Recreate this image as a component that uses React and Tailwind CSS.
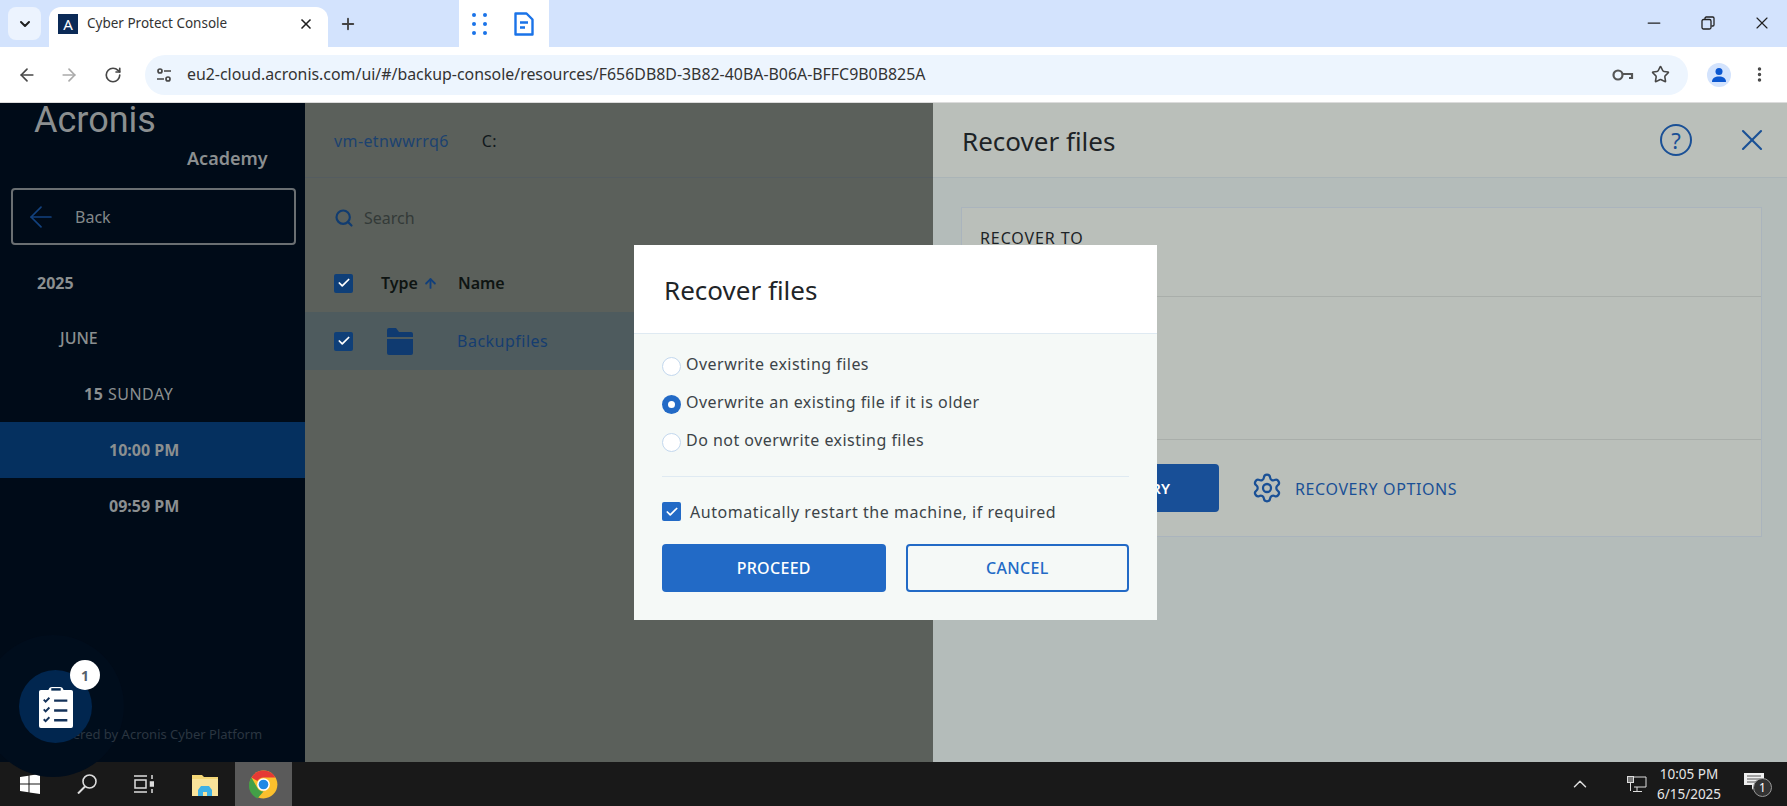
import { ArrowLeft, ArrowRight, ArrowUp, ChevronDown, ChevronUp, Check, EllipsisVertical, Minus, Plus, RotateCw, Search, Settings, Star, X } from 'lucide-react';

const sans = { fontFamily: '"Noto Sans", "Open Sans", sans-serif' };

function BlueCheck({ className }) {
  return (
    <span className={`flex h-[19px] w-[19px] shrink-0 items-center justify-center rounded-[2px] ${className}`}>
      <Check size={14} strokeWidth={3} className="text-white" />
    </span>
  );
}

function Radio({ checked }) {
  if (checked) {
    return (
      <span className="flex h-[19px] w-[19px] shrink-0 items-center justify-center rounded-full bg-[#226ac6]">
        <span className="h-[7px] w-[7px] rounded-full bg-white" />
      </span>
    );
  }
  return <span className="h-[19px] w-[19px] shrink-0 rounded-full border border-[#c3d8ee] bg-white" />;
}

function ChromeIcon() {
  return (
    <svg width="29" height="29" viewBox="0 0 48 48">
      <circle cx="24" cy="24" r="23" fill="#fbc02d" />
      <path d="M24 1a23 23 0 0 1 19.9 11.5H24a11.5 11.5 0 0 0-10 5.8L4.1 12.5A23 23 0 0 1 24 1z" fill="#e53935" />
      <path d="M4.1 12.5 14 29.8a11.5 11.5 0 0 0 10 5.7L14 47 A23 23 0 0 1 4.1 12.5z" fill="#43a047" />
      <circle cx="24" cy="24" r="10.5" fill="#fff" />
      <circle cx="24" cy="24" r="8" fill="#1e88e5" />
    </svg>
  );
}

function ChromeBar() {
  return (
    <>
      <div className="flex h-[47px] shrink-0 bg-[#d3e3fd] text-[#1f1f1f]">
        <div className="ml-[8px] mt-[7px] flex h-[33px] w-[33px] items-center justify-center rounded-lg bg-[#ecf3fe]">
          <ChevronDown size={16} strokeWidth={3} />
        </div>
        <div className="ml-[8px] mt-[7px] flex h-[40px] w-[279px] items-start rounded-t-xl bg-white pl-[9px] pt-[7px]">
          <span className="flex h-[20px] w-[20px] items-center justify-center bg-[#0b2a57] text-[15px] text-white">A</span>
          <span className="ml-[9px] w-[211px] text-[13.5px] leading-[19px] text-[#333]" style={sans}>Cyber Protect Console</span>
          <X size={16} strokeWidth={2.5} className="mt-[2px]" />
        </div>
        <Plus size={18} strokeWidth={2.5} className="ml-[11px] mt-[15px] text-[#444]" />
        <div className="ml-[102px] flex h-[48px] w-[90px] items-center bg-white pl-[12px]">
          <svg width="18" height="24" viewBox="0 0 18 24" fill="#1a73e8">
            <circle cx="3" cy="3" r="2" /><circle cx="14" cy="3" r="2" />
            <circle cx="3" cy="12" r="2" /><circle cx="14" cy="12" r="2" />
            <circle cx="3" cy="21" r="2" /><circle cx="14" cy="21" r="2" />
          </svg>
          <svg className="ml-[25px]" width="20" height="24" viewBox="0 0 20 24" fill="none" stroke="#1a73e8" strokeWidth="2.4">
            <path d="M1.5 1.5h11l6 6v15h-17z" strokeLinejoin="round" />
            <path d="M6 10.5h8M6 15.5h5" />
          </svg>
        </div>
        <div className="ml-auto mr-[15px] flex items-center gap-[37px] pb-[1px] text-[#222]">
          <Minus size={20} strokeWidth={1.5} />
          <svg width="14" height="14" viewBox="0 0 14 14" fill="none" stroke="currentColor" strokeWidth="1.3">
            <rect x="1" y="3.5" width="9" height="9.5" rx="1.5" />
            <path d="M4 3V2.2A1.2 1.2 0 0 1 5.2 1h6.6A1.2 1.2 0 0 1 13 2.2v6.6A1.2 1.2 0 0 1 11.8 10H10.5" />
          </svg>
          <X size={20} strokeWidth={1.4} />
        </div>
      </div>
      <div className="flex h-[56px] shrink-0 items-center rounded-t-lg border-b border-[#dcdcdc] bg-white pl-[17px] text-[#474747]">
        <ArrowLeft size={20} strokeWidth={2} />
        <ArrowRight size={20} strokeWidth={2} className="ml-[22px] text-[#aaaaaa]" />
        <RotateCw size={18} strokeWidth={2.2} className="ml-[25px]" />
        <div className="ml-[23px] flex h-[40px] w-[1543px] items-center rounded-full bg-[#edf5fe] pl-[11px]">
          <svg width="16" height="16" viewBox="0 0 16 16" fill="none" stroke="#474747" strokeWidth="1.7">
            <circle cx="4" cy="4" r="2" /><path d="M8 4h7M1 12h7" /><circle cx="12" cy="12" r="2" />
          </svg>
          <span className="ml-[15px] w-[1425px] text-[15.9px] text-[#333]" style={sans}>eu2-cloud.acronis.com/ui/#/backup-console/resources/F656DB8D-3B82-40BA-B06A-BFFC9B0B825A</span>
          <svg width="22" height="14" viewBox="0 0 22 14" fill="none" stroke="#555" strokeWidth="2.2">
            <circle cx="6" cy="7" r="4.5" /><path d="M11 6h9v4h-3" />
          </svg>
          <Star size={19} strokeWidth={2} className="ml-[17px]" />
        </div>
        <div className="ml-[19px] flex h-[24px] w-[24px] items-center justify-center rounded-full bg-[#d3e3fd]">
          <svg width="16" height="16" viewBox="0 0 16 16" fill="#0b57d0">
            <circle cx="8" cy="4.5" r="3.5" /><path d="M1 15c0-4 3-5.5 7-5.5s7 1.5 7 5.5z" />
          </svg>
        </div>
        <EllipsisVertical size={19} strokeWidth={2.4} className="ml-[19px]" />
      </div>
    </>
  );
}

function Sidebar() {
  return (
    <div className="relative flex w-[305px] shrink-0 flex-col bg-[#000b18] text-[#8b8f90]" style={sans}>
      <div className="absolute left-[-18px] top-[532px] h-[142px] w-[142px] rounded-full bg-[#000d1c]" />
      <div className="relative h-[85px] pl-[34px]">
        <div className="text-[36px] leading-[34px]" style={{ fontFamily: 'Roboto, sans-serif' }}>Acronis</div>
        <div className="ml-[153px] mt-[9px] text-[18px] font-semibold leading-[24px]">Academy</div>
      </div>
      <div className="relative ml-[11px] flex h-[57px] w-[285px] items-center rounded-[4px] border-2 border-[#6a6f72] pl-[11px]">
        <ArrowLeft size={34} strokeWidth={1.2} className="text-[#12427f]" />
        <span className="ml-[17px] text-[16px] text-[#83888a]">Back</span>
      </div>
      <div className="relative mt-[9px] flex h-[56px] items-center pl-[37px] pt-[1px] text-[16px] font-bold">2025</div>
      <div className="relative flex h-[56px] items-center pl-[60px] text-[16px] font-medium">JUNE</div>
      <div className="relative flex h-[56px] items-center pl-[84px] text-[16px] tracking-[0.5px]"><b>15</b>&nbsp;SUNDAY</div>
      <div className="relative flex h-[56px] items-center bg-[#05305f] pl-[109px] text-[16px] font-bold">10:00 PM</div>
      <div className="relative flex h-[56px] items-center pl-[109px] text-[16px] font-bold">09:59 PM</div>
      <div className="relative mt-auto pb-[18px] pl-[47px] text-[13px] text-[#2b3641]">Powered by Acronis Cyber Platform</div>

      <div className="absolute left-[19px] top-[567px] flex h-[73px] w-[73px] items-center justify-center rounded-full bg-[#01264f]">
        <svg width="34" height="43" viewBox="0 0 36 44" preserveAspectRatio="none">
          <path d="M2 5h8a4 4 0 0 1 4-3h8a4 4 0 0 1 4 3h8a2 2 0 0 1 2 2v35a2 2 0 0 1-2 2H2a2 2 0 0 1-2-2V7a2 2 0 0 1 2-2z" fill="#fff" />
          <path d="M13 4.500h10" stroke="#01264f" strokeWidth="2.500" />
          <g fill="none" stroke="#14325a" strokeWidth="2">
            <path d="M5 15l2 2 4-4M5 25l2 2 4-4M5 35l2 2 4-4" />
            <path d="M16 16h14M16 26h14M16 36h14" strokeWidth="2.500" />
          </g>
        </svg>
      </div>
      <div className="absolute left-[70px] top-[557px] flex h-[30px] w-[30px] items-center justify-center rounded-full bg-white text-[14px] font-bold text-[#555f6c]">1</div>
    </div>
  );
}

function FilesColumn() {
  return (
    <div className="flex w-[628px] shrink-0 flex-col bg-[#5b605b]" style={sans}>
      <div className="flex h-[75px] items-center border-b border-[#545c60] pl-[29px] pt-[2px] text-[16px] tracking-[0.4px]">
        <span className="text-[#1b4270]">vm-etnwwrrq6</span>
        <span className="ml-[33px] text-[#11181c]">C:</span>
      </div>
      <div className="flex h-[76px] items-center pl-[29px] pt-[4px] text-[16px] text-[#333a38]">
        <Search size={20} strokeWidth={2.6} className="text-[#113c70]" />
        <span className="ml-[10px]">Search</span>
      </div>
      <div className="flex h-[58px] items-center pl-[29px] text-[16px] font-semibold text-[#0e1412]">
        <BlueCheck className="bg-[#0f3f78]" />
        <span className="ml-[28px]">Type</span>
        <ArrowUp size={15} strokeWidth={3} className="ml-[5px] text-[#113f7b]" />
        <span className="ml-[20px]">Name</span>
      </div>
      <div className="flex h-[58px] items-center bg-[#4e5b5e] pl-[29px] text-[16px] tracking-[0.5px] text-[#153d70]">
        <BlueCheck className="bg-[#0f3f78]" />
        <svg className="ml-[34px]" width="26" height="27" viewBox="0 0 26 27" fill="#0f3a70">
          <path d="M0 2a2 2 0 0 1 2-2h7l3 4h12a2 2 0 0 1 2 2v3H0z" />
          <path d="M0 11h26v14a2 2 0 0 1-2 2H2a2 2 0 0 1-2-2z" />
        </svg>
        <span className="ml-[44px]">Backupfiles</span>
      </div>
    </div>
  );
}

function RecoverPanel() {
  return (
    <div className="flex flex-1 flex-col bg-[#b4bcba]" style={sans}>
      <div className="flex h-[75px] shrink-0 items-center border-b border-[#aab4b7] bg-[#babfba] pl-[29px] text-[#1d2326]">
        <span className="pt-[2px] text-[26px]">Recover files</span>
        <span className="ml-auto flex h-[32px] w-[32px] items-center justify-center rounded-full border-2 border-[#1a5096] text-[22px] text-[#1a5096]">?</span>
        <X size={36} strokeWidth={1.4} className="ml-[42px] mr-[17px] text-[#1a5096]" />
      </div>
      <div className="ml-[28px] mr-[25px] mt-[29px] flex h-[330px] flex-col border border-[#aab4bd] bg-[#babfba]">
        <div className="h-[89px] border-b border-[#a9aeaa] pl-[18px] pt-[18px] text-[16px] tracking-[0.9px] text-[#1d2326]">RECOVER TO</div>
        <div className="h-[143px] border-b border-[#a9aeaa]" />
        <div className="flex flex-1 items-center">
          <div className="ml-[100px] flex h-[48px] w-[157px] items-center justify-end rounded-[4px] bg-[#184f97] pr-[49px] text-[15px] font-semibold text-white">RECOVERY</div>
          <Settings size={32} strokeWidth={1.7} className="ml-[32px] text-[#1a5096]" />
          <span className="ml-[12px] pt-[1px] text-[16px] tracking-[0.6px] text-[#1a5096]">RECOVERY OPTIONS</span>
        </div>
      </div>
    </div>
  );
}

function Modal() {
  const options = [
    { label: 'Overwrite existing files', checked: false },
    { label: 'Overwrite an existing file if it is older', checked: true },
    { label: 'Do not overwrite existing files', checked: false },
  ];
  return (
    <div className="absolute left-[634px] top-[245px] w-[523px] bg-[#f5f9f7]" style={sans}>
      <div className="flex h-[89px] items-center border-b border-[#dfeaf2] bg-white pl-[30px] pt-[3px] text-[26px] text-[#1f2528]">Recover files</div>
      <div className="px-[28px]">
        <div className="flex flex-col gap-[19px] border-b border-[#dfeaf2] pb-[24px] pt-[23px]">
          {options.map((o) => (
            <div key={o.label} className="flex h-[19px] items-center gap-[5px] text-[16px] tracking-[0.47px] text-[#3c4448]">
              <Radio checked={o.checked} />
              <span className="-mt-[5px]">{o.label}</span>
            </div>
          ))}
        </div>
        <div className="mt-[25px] flex h-[19px] items-center gap-[9px] text-[16px] tracking-[0.55px] text-[#3c4448]">
          <BlueCheck className="bg-[#226ac6]" />
          <span>Automatically restart the machine, if required</span>
        </div>
        <div className="mt-[23px] flex gap-[20px] pb-[28px]">
          <div className="flex h-[48px] w-[224px] items-center justify-center rounded-[4px] bg-[#226ac6] text-[16px] font-medium tracking-[0.3px] text-white">PROCEED</div>
          <div className="flex h-[48px] w-[224px] items-center justify-center rounded-[4px] border-2 border-[#226ac6] text-[16px] font-medium tracking-[0.3px] text-[#226ac6]">CANCEL</div>
        </div>
      </div>
    </div>
  );
}

function Taskbar() {
  return (
    <div className="flex h-[44px] shrink-0 items-center bg-[#191919] text-white" style={sans}>
      <svg className="ml-[20px]" width="20" height="20" viewBox="0 0 20 20" fill="#fff">
        <path d="M0 3l8.500-1.200v7.700H0zM9.500 1.600 20 0v9.500H9.500zM0 10.500h8.500v7.700L0 17zM9.500 10.500H20V20L9.500 18.400z" />
      </svg>
      <svg className="ml-[37px]" width="20" height="20" viewBox="0 0 20 20" fill="none" stroke="#ddd" strokeWidth="1.600">
        <circle cx="12.500" cy="7.500" r="6.500" /><path d="M8 12.500 1 19.500" strokeWidth="2" />
      </svg>
      <svg className="ml-[37px]" width="20" height="18" viewBox="0 0 20 18" fill="none" stroke="#ddd" strokeWidth="1.500">
        <path d="M0 1h13M0 17h13" /><rect x="1" y="5" width="11" height="8" />
        <path d="M18 0v4M18 14v4" /><rect x="16.500" y="7" width="3" height="4" fill="#ddd" />
      </svg>
      <svg className="ml-[38px]" width="26" height="23" viewBox="0 0 26 23">
        <path d="M0 2h10l2 2h14v19H0z" fill="#f3d676" />
        <path d="M0 6h26v17H0z" fill="#f8e39a" />
        <path d="M6 23v-6l3-4h8l3 4v6h-5v-4h-4v4z" fill="#3db1e6" />
      </svg>
      <div className="ml-[17px] flex h-[44px] w-[57px] items-center justify-center bg-[#5a5a5a]">
        <ChromeIcon />
      </div>
      <ChevronUp size={22} strokeWidth={1.6} className="ml-[1277px] text-[#ddd]" />
      <svg className="ml-[36px]" width="20" height="17" viewBox="0 0 20 17" fill="none" stroke="#ddd" strokeWidth="1">
        <path d="M4 1h15v10H7M10 11v4M6 15.500h9" /><rect x="0.500" y="0.500" width="6" height="6" fill="#777" />
        <path d="M3.500 7v8" />
      </svg>
      <div className="ml-[10px] flex w-[64px] flex-col items-center text-[13.5px] leading-[20px] text-[#e6e6e6]">
        <span>10:05 PM</span>
        <span>6/15/2025</span>
      </div>
      <div className="relative ml-[23px] h-[22px] w-[20px]">
        <svg width="20" height="17" viewBox="0 0 20 17" fill="#eee">
          <path d="M0 0h20v12H11l-3 5v-5H0z" />
          <path d="M3 3h14M3 6h14M3 9h14" stroke="#555" strokeWidth="1" />
        </svg>
        <span className="absolute left-[9px] top-[5px] flex h-[19px] w-[19px] items-center justify-center rounded-full border border-[#999] bg-[#333] text-[12px] text-white">1</span>
      </div>
    </div>
  );
}

export default function App() {
  return (
    <div className="relative flex h-[806px] w-[1787px] flex-col overflow-hidden bg-white">
      <ChromeBar />
      <div className="flex min-h-0 flex-1">
        <Sidebar />
        <FilesColumn />
        <RecoverPanel />
      </div>
      <Taskbar />
      <Modal />
    </div>
  );
}
